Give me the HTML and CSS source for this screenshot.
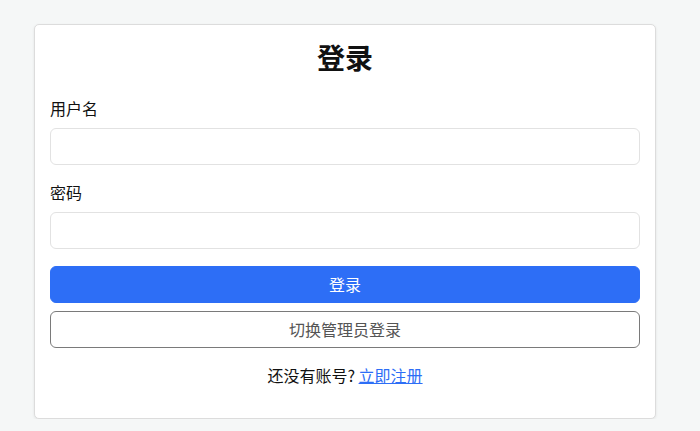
FILE: index.html
```html
<!DOCTYPE html>
<html lang="zh">
<head>
<meta charset="utf-8">
<link rel="stylesheet" href="styles.css">
</head>
<body>
<div class="card">
  <h2 class="title">登录</h2>
  <div class="field">
    <label class="label">用户名</label>
    <input class="input" type="text">
  </div>
  <div class="field">
    <label class="label">密码</label>
    <input class="input" type="password">
  </div>
  <button class="btn btn-primary">登录</button>
  <button class="btn btn-outline">切换管理员登录</button>
  <p class="footer">还没有账号? <a href="#" class="link">立即注册</a></p>
</div>
</body>
</html>
```
FILE: styles.css
```css
* { box-sizing: border-box; }
html, body { margin: 0; padding: 0; }
body {
  background: #f5f7f7;
  font-family: "Noto Sans CJK SC", "Noto Sans", sans-serif;
  font-size: 16px;
  color: #111;
  padding-top: 24px;
}
.card {
  margin-left: 34px;
  width: 622px;
  height: 395px;
  background: #fff;
  border: 1px solid #dcdcdc;
  border-radius: 5px;
  box-shadow: 0 1px 3px rgba(0,0,0,0.08);
  padding: 15px 15px 0 15px;
  display: flex;
  flex-direction: column;
}
.title {
  margin: 0;
  font-size: 28px;
  line-height: 34px;
  font-weight: 700;
  text-align: center;
  color: #111;
}
.field {
  display: flex;
  flex-direction: column;
  gap: 8px;
  margin-top: 22px;
}
.field + .field { margin-top: 15px; }
.label {
  font-size: 16px;
  line-height: 24px;
  color: #111;
}
.input {
  height: 37px;
  border: 1px solid #e2e2e2;
  border-radius: 6px;
  background: #fff;
  font-size: 16px;
  padding: 0 12px;
  outline: none;
}
.btn {
  height: 37px;
  border-radius: 6px;
  font-family: inherit;
  font-size: 16px;
  line-height: 24px;
  padding: 0 0 2px 0;
  cursor: pointer;
}
.btn-primary {
  margin-top: 17px;
  background: #2d6ef6;
  border: 1px solid #2d6ef6;
  color: #fff;
}
.btn-outline {
  margin-top: 8px;
  background: #fff;
  border: 1px solid #7a7a7a;
  color: #555;
}
.footer {
  margin: 15px 0 0 0;
  text-align: center;
  line-height: 24px;
  color: #111;
}
.link {
  color: #2d6ef6;
  text-decoration: underline;
}
```
